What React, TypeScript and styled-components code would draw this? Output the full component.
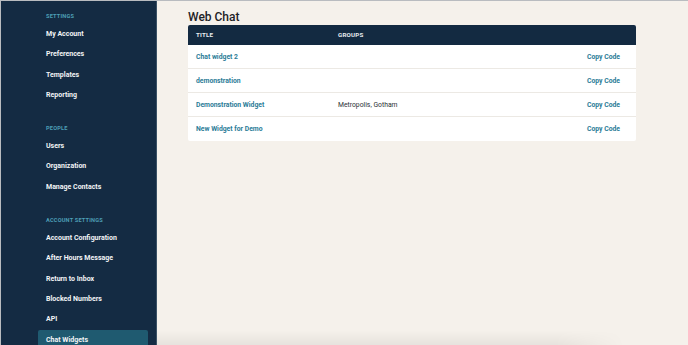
import React from 'react';
import styled, { createGlobalStyle } from 'styled-components';

const GlobalStyle = createGlobalStyle`
  html, body {
    margin: 0;
    padding: 0;
    background: #f5f1eb;
  }
  body {
    font-family: Roboto, "Noto Sans", "Liberation Sans", sans-serif;
  }
`;

const Shell = styled.div`
  width: 688px;
  height: 345px;
  display: flex;
  box-sizing: border-box;
  border-top: 1px solid #b9bcc0;
  border-left: 1px solid #b9bcc0;
  overflow: hidden;
`;

const Sidebar = styled.nav`
  width: 156px;
  flex-shrink: 0;
  background: #142b43;
  border-right: 1px solid #3b5266;
  box-sizing: border-box;
  padding: 9px 0 0 37px;
  display: flex;
  flex-direction: column;
`;

const Section = styled.div`
  display: flex;
  flex-direction: column;
  width: 110px;
  & + & {
    margin-top: 16.5px;
  }
`;

const SectionLabel = styled.div`
  height: 12px;
  line-height: 12px;
  padding-left: 8px;
  margin-bottom: 2px;
  font-size: 5.6px;
  font-weight: 700;
  letter-spacing: 0.2px;
  color: #4d9fb6;
  text-transform: uppercase;
`;

const NavItem = styled.div<{ $active?: boolean }>`
  height: 20.4px;
  line-height: 20.4px;
  padding-left: 8px;
  border-radius: 2px;
  font-size: 7px;
  font-weight: 700;
  color: #f2f4f6;
  background: ${(p) => (p.$active ? '#1f5a70' : 'transparent')};
  white-space: nowrap;
`;

const Main = styled.main`
  flex: 1;
  display: flex;
  flex-direction: column;
  padding: 9px 51px 0 31px;
  background: #f5f1eb;
`;

const Title = styled.h1`
  margin: 0;
  height: 15px;
  line-height: 15px;
  font-size: 12px;
  font-weight: 500;
  color: #1e2226;
`;

const Table = styled.div`
  width: 448px;
  background: #fff;
  display: flex;
  flex-direction: column;
  border-radius: 2px;
  overflow: hidden;
`;

const HeaderRow = styled.div`
  display: grid;
  grid-template-columns: 142px 1fr auto;
  height: 20px;
  align-items: center;
  padding: 0 16px 0 8px;
  background: #132a41;
  font-size: 6.2px;
  font-weight: 700;
  color: #e9edf1;
  text-transform: uppercase;
  letter-spacing: 0.2px;
`;

const Row = styled.div`
  display: grid;
  grid-template-columns: 142px 1fr auto;
  height: 24px;
  box-sizing: border-box;
  align-items: center;
  padding: 0 16px 0 8px;
  border-bottom: 1px solid #ece9e4;
  &:last-child {
    border-bottom: none;
  }
`;

const LinkText = styled.span`
  font-size: 6.8px;
  font-weight: 700;
  color: #2b7c97;
`;

const Plain = styled.span`
  font-size: 6.8px;
  color: #2b2f33;
`;

const Spacer = styled.div`
  flex: 1;
`;

const Shade = styled.div`
  height: 14px;
  margin: 0 -51px 0 -31px;
  background: linear-gradient(to bottom, rgba(0, 0, 0, 0) 0%, rgba(0, 0, 0, 0.06) 100%);
  -webkit-mask-image: linear-gradient(to right, #000 0%, #000 75%, transparent 88%);
  mask-image: linear-gradient(to right, #000 0%, #000 75%, transparent 88%);
`;

const sections = [
  { label: 'Settings', items: ['My Account', 'Preferences', 'Templates', 'Reporting'] },
  { label: 'People', items: ['Users', 'Organization', 'Manage Contacts'] },
  {
    label: 'Account Settings',
    items: [
      'Account Configuration',
      'After Hours Message',
      'Return to Inbox',
      'Blocked Numbers',
      'API',
      'Chat Widgets',
    ],
  },
];

const widgets = [
  { title: 'Chat widget 2', groups: '' },
  { title: 'demonstration', groups: '' },
  { title: 'Demonstration Widget', groups: 'Metropolis, Gotham' },
  { title: 'New Widget for Demo', groups: '' },
];

export default function App() {
  return (
    <>
      <GlobalStyle />
      <Shell>
        <Sidebar>
          {sections.map((s) => (
            <Section key={s.label}>
              <SectionLabel>{s.label}</SectionLabel>
              {s.items.map((item) => (
                <NavItem key={item} $active={item === 'Chat Widgets'}>
                  {item}
                </NavItem>
              ))}
            </Section>
          ))}
        </Sidebar>
        <Main>
          <Title>Web Chat</Title>
          <Table>
            <HeaderRow>
              <span>Title</span>
              <span>Groups</span>
              <span />
            </HeaderRow>
            {widgets.map((w) => (
              <Row key={w.title}>
                <LinkText>{w.title}</LinkText>
                <Plain>{w.groups}</Plain>
                <LinkText>Copy Code</LinkText>
              </Row>
            ))}
          </Table>
          <Spacer />
          <Shade />
        </Main>
      </Shell>
    </>
  );
}
